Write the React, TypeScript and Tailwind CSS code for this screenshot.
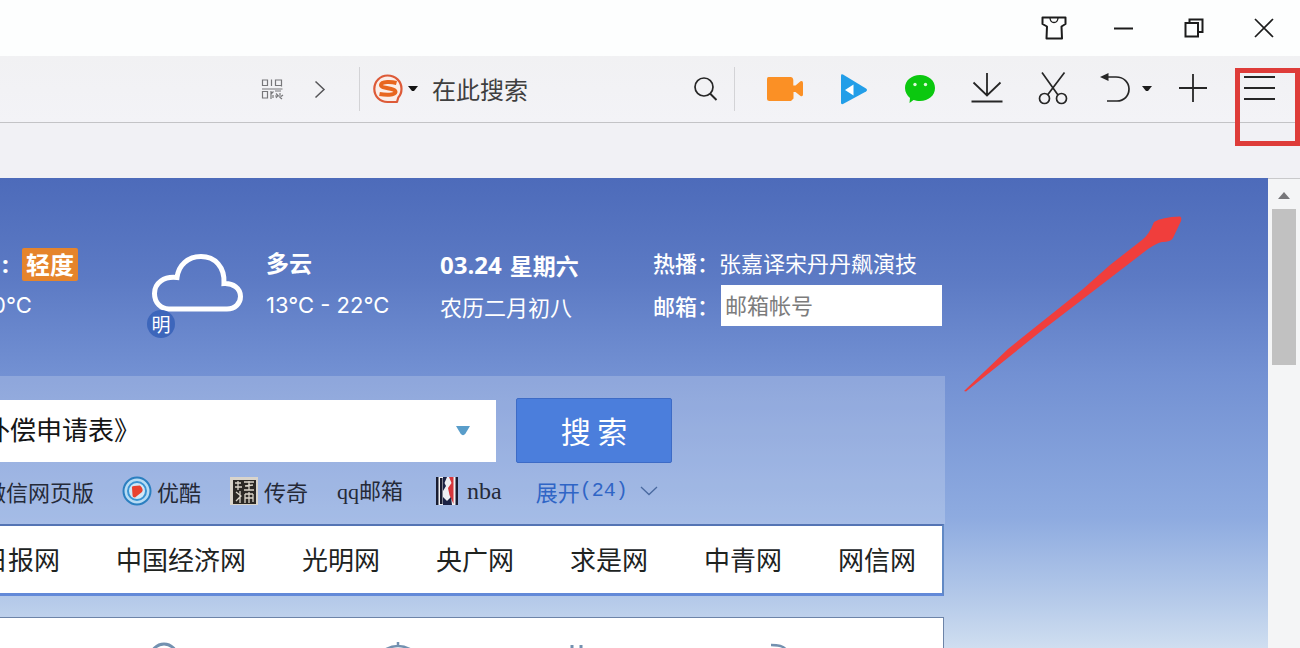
import React from "react";

const cjk = "font-['Noto_Sans_CJK_SC',sans-serif]";

function TitleBar() {
  const button = "flex h-14 w-[70px] items-center justify-center";
  return (
    <header className="flex h-14 shrink-0 justify-end bg-[#fdfefe] pr-px text-[#1c1c1c]">
      <button aria-label="皮肤" className={button}>
        <svg width="26" height="24" viewBox="0 0 26 24" fill="none" stroke="currentColor" strokeWidth="2" strokeLinejoin="round">
          <path d="M1.500 1.500H24.500V8L20.500 10.500L21 22.500H5.500L6 10.500L1.500 8Z" />
          <path d="M9 2C9.500 8 16.500 8 17 2" strokeWidth="1.300" />
        </svg>
      </button>
      <button aria-label="最小化" className={button}>
        <svg width="20" height="20" viewBox="0 0 20 20" stroke="currentColor" strokeWidth="2">
          <path d="M0 10.500H19" />
        </svg>
      </button>
      <button aria-label="还原" className={button}>
        <svg width="20" height="20" viewBox="0 0 20 20" fill="none" stroke="currentColor" strokeWidth="2">
          <path d="M1.500 5H14V18.500H1.500Z" />
          <path d="M5.500 5V1.500H18.500V14H14" />
        </svg>
      </button>
      <button aria-label="关闭" className={button}>
        <svg width="20" height="20" viewBox="0 0 20 20" stroke="currentColor" strokeWidth="1.700">
          <path d="M1 1L19 19M19 1L1 19" />
        </svg>
      </button>
    </header>
  );
}

function Toolbar() {
  return (
    <div className="flex h-[67px] shrink-0 items-center border-b border-[#c3c3c6] bg-gradient-to-b from-[#f1f1f3] to-[#f3f3f7] text-[#262626]">
      <button aria-label="二维码" className="ml-[261px] text-[#77777a]">
        <svg width="23" height="24" viewBox="0 0 23 24" fill="none" stroke="currentColor" strokeWidth="1.200">
          <path d="M1.500 3H6.500V8.500H1.500ZM10.500 2.500V9M20.500 9.500V3H14.500V8.500H20.500M1 12H21.500M1.500 14.500H6.500V21H1.500ZM10 14V22M10 17L12.500 14.500M12 18V21M14 14H20M15 16.500L17 18.500L15 21M19 16V18M18.500 20L21 22M20 19.500L22 18M14 19H21" />
        </svg>
      </button>
      <button aria-label="前进" className="ml-[30px] text-[#555558]">
        <svg width="12" height="20" viewBox="0 0 12 20" fill="none" stroke="currentColor" strokeWidth="1.500">
          <path d="M1.500 2.500L10 10.500L1.500 18.500" />
        </svg>
      </button>
      <form className="ml-[33px] flex h-11 min-w-0 flex-1 items-center border-x border-[#d3d3d6]" onSubmit={(e) => e.preventDefault()}>
        <button type="button" aria-label="选择搜索引擎" className="ml-[12px] flex items-center gap-1">
          <svg width="32" height="32" viewBox="0 0 32 32" fill="none">
            <path d="M15.500 2.500C8 2.500 2.300 8.500 2.300 15.800C2.300 23.500 8 29 15.500 29H25L26.300 24.500C28.600 22.200 29.500 19 29.500 15.800C29.500 8.500 23.500 2.500 15.500 2.500Z" fill="#fbeee9" stroke="#dd5a38" strokeWidth="2.200" strokeLinejoin="round" />
            <path d="M24.500 10C20 8.800 9.500 8 9 12C9 16 23.500 14.500 23.500 19C23 22.500 13 22 7.500 21" stroke="#e8661f" strokeWidth="4" />
          </svg>
          <svg width="10" height="6" viewBox="0 0 10 6" fill="#141414">
            <path d="M0 0H10L6 5H4Z" />
          </svg>
        </button>
        <input
          aria-label="搜索"
          placeholder="在此搜索"
          className={"mb-0.5 ml-[14px] h-10 min-w-0 flex-1 bg-transparent text-[24px] outline-none placeholder:text-[#3f3f3f] " + cjk}
        />
        <button aria-label="搜索" className="mr-4">
          <svg width="24" height="24" viewBox="0 0 24 24" fill="none" stroke="currentColor" strokeWidth="1.700">
            <circle cx="10" cy="10" r="9" />
            <path d="M16 16.500L22.500 23" strokeWidth="2" />
          </svg>
        </button>
      </form>
      <div className="ml-[22px] mr-[15px] flex h-full shrink-0 items-center gap-[25px]">
        <button aria-label="录像" className="flex w-14 justify-center">
          <svg width="38" height="28" viewBox="0 0 38 28" fill="#fb9025">
            <path d="M2.500 2H24.500Q27 2 27.300 5V10.500H29.500L34.500 6.300Q37 5.500 37 8V19.500Q37 22 34.500 21L29.500 17H27.500V23.500L25 26H3.500Q1 26 1 23.500V4Q1 2 2.500 2Z" />
          </svg>
        </button>
        <button aria-label="视频" className="flex w-8 justify-center">
          <svg width="28" height="32" viewBox="0 0 28 32">
            <path d="M1 2.500Q1 .800 3 1.500L26 15.500Q28 17 26 18.500L3 31Q1 31.500 1 30Z" fill="#229ee8" />
            <path d="M5 17L13.500 11.500V22.500Z" fill="#fff" />
          </svg>
        </button>
        <button aria-label="微信" className="flex w-[49px] justify-center">
          <svg width="32" height="30" viewBox="0 0 32 30">
            <path d="M16 1C24.500 1 31 6.500 31 14C31 21.500 24.500 27 16 27C13.500 27 11.200 26.500 9.500 26L5.500 29L6 24C3 21.500 1 18 1 14C1 6.500 7.500 1 16 1Z" fill="#0bc80f" />
            <circle cx="11" cy="10.500" r="1.700" fill="#d9f8d8" />
            <circle cx="21.500" cy="10.500" r="1.700" fill="#d9f8d8" />
          </svg>
        </button>
        <button aria-label="下载" className="flex w-9 justify-center">
          <svg width="32" height="32" viewBox="0 0 32 32" fill="none" stroke="currentColor" strokeWidth="1.800">
            <path d="M16 0V22M2.500 9.500L16 22.500L29.500 9.500M.500 28.500H31.500" />
          </svg>
        </button>
        <button aria-label="截图" className="flex w-[45px] justify-center">
          <svg width="30" height="34" viewBox="0 0 30 34" fill="none" stroke="currentColor" strokeWidth="1.700">
            <path d="M4 .500L20 23M26.500 .500L9.500 23" />
            <circle cx="6.500" cy="26.500" r="5" />
            <circle cx="23.500" cy="26.500" r="5" />
          </svg>
        </button>
        <button aria-label="撤销" className="flex w-[52px] items-center justify-between">
          <svg width="32" height="32" viewBox="0 0 32 32" fill="none" stroke="currentColor" strokeWidth="1.700">
            <path d="M4 4H16C24 4 29 9.500 29 16C29 23 24 28 17 28H7" />
            <path d="M0 4L8.500 0V8Z" fill="currentColor" stroke="none" />
          </svg>
          <svg width="10" height="6" viewBox="0 0 10 6" fill="#1d1d1d">
            <path d="M0 0H10L6 5H4Z" />
          </svg>
        </button>
        <button aria-label="新建" className="flex w-8 justify-center">
          <svg width="28" height="30" viewBox="0 0 28 30" stroke="currentColor" strokeWidth="1.800">
            <path d="M14 0V28M0 14H28" />
          </svg>
        </button>
        <div className="relative flex w-[51px] justify-center">
          <button aria-label="菜单">
            <svg width="31" height="28" viewBox="0 0 31 28" stroke="currentColor" strokeWidth="2">
              <path d="M0 2H31M0 13H31M0 24H31" />
            </svg>
          </button>
          <div className="pointer-events-none absolute left-px -top-[7px] h-[78px] w-[65px] border-[5px] border-[#de3c39]" />
        </div>
      </div>
    </div>
  );
}

function Weather() {
  return (
    <section className={"flex h-[198px] shrink-0 items-start pt-[66px] text-white " + cjk}>
      <div className="w-[78px] shrink-0">
        <div className="flex h-10 items-center gap-2.5">
          <span className="w-3 shrink-0 pl-0.5 font-['Noto_Sans'] text-2xl font-bold">:</span>
          <span className="flex h-[33px] shrink-0 items-center rounded-xs bg-[#e5842b] px-1 text-2xl font-bold">轻度</span>
        </div>
        <div className="-ml-2 h-10 font-['Inter'] text-[22px] leading-[42px]">0°C</div>
      </div>
      <div className="relative ml-[72px] mt-2 shrink-0">
        <svg width="96" height="62" viewBox="0 0 96 62" fill="none" stroke="#fff" strokeWidth="5">
          <path d="M19 57H77C85 57 90.500 51.500 90.500 44.500C90.500 36 83 31 74 31.500C75 15 65 4.500 51 4.500C38 4.500 28.500 13 27 25.500C14 24 4.500 31 4.500 41.500C4.500 51 11 57 19 57Z" />
        </svg>
        <span className="absolute -left-[3px] top-[58px] flex size-7 items-center justify-center rounded-full bg-[#3d66bb] text-[19px]">明</span>
      </div>
      <div className="ml-5 w-[174px] shrink-0">
        <div className="h-10 text-[23px] font-bold leading-9">多云</div>
        <div className="font-['Inter'] text-[22px] leading-[42px]">13°C - 22°C</div>
      </div>
      <div className="w-[213px] shrink-0">
        <div className="flex h-[42px] items-center gap-2 text-[23px] font-bold">
          <span className="font-['Open_Sans'] text-2xl">03.24</span>
          <span>星期六</span>
        </div>
        <div className="text-[22px] leading-10">农历二月初八</div>
      </div>
      <div className="shrink-0 text-[22px]">
        <div className="flex h-9 items-center">
          <span className="w-[66px] font-medium">热播：</span>
          <a href="#hot">张嘉译宋丹丹飙演技</a>
        </div>
        <div className="mt-[5px] flex h-[41px] items-center">
          <label htmlFor="mail" className="w-[68px] font-medium">邮箱：</label>
          <input id="mail" placeholder="邮箱帐号" className="h-[41px] w-[221px] bg-white px-1 pb-1 text-black outline-none placeholder:text-[#7c7c7c]" />
        </div>
      </div>
    </section>
  );
}

function SearchPanel() {
  return (
    <section className={"h-[148px] shrink-0 bg-white/20 pt-[22px] " + cjk}>
      <form className="flex h-[65px] items-center gap-5" onSubmit={(e) => e.preventDefault()}>
        <div className="-ml-4 flex h-[62px] w-[512px] items-center bg-white">
          <input aria-label="搜索内容" defaultValue="补偿申请表》" className="h-full min-w-0 flex-1 pb-1 text-[26px] text-[#141414] outline-none" />
          <button type="button" aria-label="展开历史" className="mr-[26px]">
            <svg width="14" height="10" viewBox="0 0 14 10" fill="#599dca">
              <path d="M0 0H14L9.500 7.500Q7 11 4.500 7.500Z" />
            </svg>
          </button>
        </div>
        <button className="h-[65px] w-[156px] rounded-xs border border-[#3d6bc6] bg-[#4b7edc] text-[30px] text-white">搜 索</button>
      </form>
      <nav className="-ml-4 mt-1.5 flex h-11 items-center whitespace-nowrap text-[22px] text-[#252a38]">
        <a href="#wx">微信网页版</a>
        <a href="#youku" className="ml-7 flex items-center gap-[5px]">
          <svg width="30" height="30" viewBox="0 0 30 30" fill="none">
            <circle cx="15" cy="15" r="13.500" fill="#b7dcf4" stroke="#2b7fc0" strokeWidth="2" />
            <circle cx="15" cy="15" r="9" fill="#cfe8f8" stroke="#3a93d2" strokeWidth="2" />
            <path d="M10 12Q9.500 10 12 10L18 9.500Q22 13 20 16L13 21.500Q10.500 21.500 10.500 19Z" fill="#e8412f" />
          </svg>
          优酷
        </a>
        <a href="#game" className="ml-7 flex items-center gap-[5px]">
          <svg width="30" height="30" viewBox="0 0 30 30" fill="none">
            <path d="M1 1H29V29H1Z" fill="#d9d4cb" />
            <path d="M4 4H27V28H4Z" fill="#2c2925" />
            <path d="M6 7H12M9 5V14M6 11H13M7 16L12 20L7 25M11 15V27M15 6H25M16 10L24 9M20 5V14M15 14H25M16 18H24M16 18V27M20 16V27M24 18V26M16 22H24" stroke="#dbd5c9" strokeWidth="1.300" />
          </svg>
          传奇
        </a>
        <a href="#qq" className="ml-[29px] font-['Liberation_Serif','Noto_Sans_CJK_SC',serif]">qq邮箱</a>
        <a href="#nba" className="ml-8 flex items-center gap-2 font-['Liberation_Serif',serif] text-2xl">
          <svg width="24" height="30" viewBox="0 0 24 30">
            <path d="M1 1H23V29H1Z" fill="#efeff2" />
            <path d="M1 1H3.500V29H1ZM5 2H7.500V28H5ZM20.500 1H23V29H20.500Z" fill="#191c30" />
            <path d="M18.500 1V28L14.500 19L13 12L16.500 7L14 1Z" fill="#d6363b" />
            <path d="M8 1H12L9.500 7L11 10L8 15ZM8 21L12 25L16 21L17 29H8Z" fill="#1c2345" />
          </svg>
          nba
        </a>
        <button className="ml-[34px] flex items-center text-[#2f65c6]">
          展开
          <span className="font-['Liberation_Mono',monospace] text-[20px]">(24)</span>
          <svg className="ml-3" width="18" height="10" viewBox="0 0 18 10" fill="none" stroke="#49699f" strokeWidth="1.300">
            <path d="M1 1L9 8.500L17 1" />
          </svg>
        </button>
      </nav>
    </section>
  );
}

const sites = ["日报网", "中国经济网", "光明网", "央广网", "求是网", "中青网", "网信网"];

function Page() {
  return (
    <main className="min-w-0 flex-1 overflow-hidden bg-[linear-gradient(180deg,#4d6bba_0px,#5c7ac4_100px,#7391d3_198px,#8eabe0_340px,#b4c9e9_420px,#cfdef0_470px)]">
      <div className="mr-[323px] flex h-full flex-col">
        <Weather />
        <SearchPanel />
        <nav className={"mr-px flex h-[72px] shrink-0 items-center justify-end overflow-hidden border-b-[3px] border-r-2 border-t-2 border-b-[#6289d8] border-r-[#6289c4] border-t-[#5474b4] bg-white pb-0.5 text-[26px] text-[#20231f] " + cjk}>
          {sites.map((s) => (
            <a key={s} href="#site" className="shrink-0 px-7 last:pr-[26px]">{s}</a>
          ))}
        </nav>
        <section className="mt-[21px] mr-px min-h-8 flex-1 overflow-hidden border-r border-t border-[#6d84a8] bg-white pt-6">
          <div className="ml-[-14px] flex items-start text-[#7391b0]">
            <svg width="28" height="28" viewBox="0 0 28 28" fill="none" stroke="currentColor" strokeWidth="2.500">
              <circle cx="3" cy="16" r="12" />
            </svg>
            <svg className="ml-[136px]" width="28" height="28" viewBox="0 0 28 28" fill="none" stroke="currentColor" strokeWidth="3">
              <circle cx="14" cy="15" r="13" />
            </svg>
            <svg className="ml-[206px]" width="28" height="28" viewBox="0 0 28 28" fill="none" stroke="currentColor" strokeWidth="2.500">
              <path d="M14 0V4M2 7Q14 1 26 7" />
            </svg>
            <svg className="ml-[153px]" width="28" height="28" viewBox="0 0 28 28" fill="none" stroke="currentColor" strokeWidth="3">
              <path d="M7 3V6M16 3V6" />
            </svg>
            <svg className="ml-[175px]" width="28" height="28" viewBox="0 0 28 28" fill="none" stroke="currentColor" strokeWidth="2.500">
              <path d="M3 3Q16 3 18 8" />
            </svg>
          </div>
        </section>
      </div>
    </main>
  );
}

export default function App() {
  return (
    <div className="relative flex h-screen flex-col overflow-hidden bg-[#f1f1f5]">
      <TitleBar />
      <Toolbar />
      <div className="h-[55px] shrink-0 bg-[#f1f1f5]" />
      <div className="flex min-h-0 flex-1">
        <Page />
        <aside className="flex w-8 shrink-0 flex-col items-center border-t border-[#c9c9cb] bg-[#f4f5f6]">
          <button aria-label="向上滚动" className="flex h-[30px] items-center pt-1">
            <svg width="12" height="8" viewBox="0 0 12 8" fill="#77777a">
              <path d="M6 0L12 7H0Z" />
            </svg>
          </button>
          <div className="h-[156px] w-6 bg-[#c1c1c1]" />
        </aside>
      </div>
      <svg className="pointer-events-none absolute right-[117px] top-[215px]" width="220" height="178" viewBox="963 215 220 178" fill="#f03e3c">
        <path d="M964 391L1008 349L1083 289L1110 265L1142 240Q1149 235 1154 222Q1162 217 1180 216.500Q1182 217 1181 221L1173 238Q1171 242 1162 242Q1157 243 1148 249L1096 289L1040 332L966 391.500Z" />
      </svg>
    </div>
  );
}
